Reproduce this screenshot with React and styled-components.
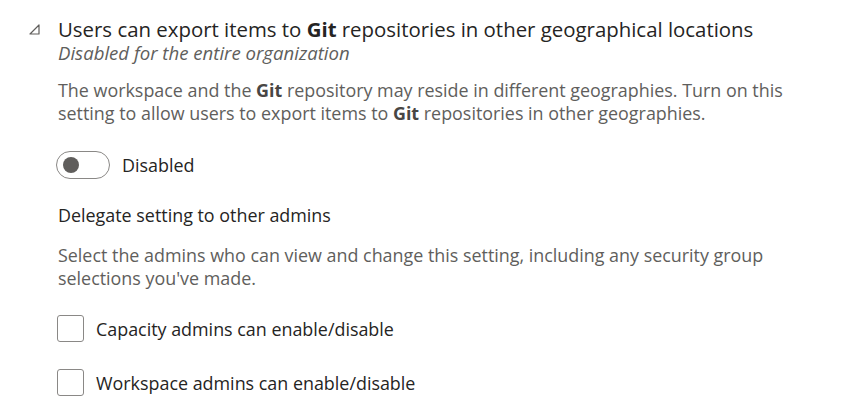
import React from "react";
import styled, { createGlobalStyle } from "styled-components";

const GlobalStyle = createGlobalStyle`
  body {
    margin: 0;
    background: #ffffff;
    font-family: "Open Sans", "Noto Sans", sans-serif;
    color: #252423;
  }
`;

const Page = styled.div`
  display: flex;
  align-items: flex-start;
  gap: 18px;
  padding: 16px 0 0 29px;
`;

const Chevron = styled.svg`
  flex: none;
  margin-top: 8px;
`;

const Body = styled.div`
  display: flex;
  flex-direction: column;
`;

const Title = styled.div`
  font-size: 20.4px;
  line-height: 26px;
  color: #252423;
`;

const Subtitle = styled.div`
  font-size: 18.6px;
  line-height: 21px;
  font-style: italic;
  color: #605e5c;
`;

const Description = styled.p`
  margin: ${(p) => p.$top}px 0 0;
  font-size: 17.9px;
  line-height: 23px;
  color: #605e5c;
  max-width: 728px;
`;

const Strong = styled.b`
  display: inline-block;
  font-weight: 700;
  color: ${(p) => p.$color || "inherit"};
`;

const ToggleRow = styled.label`
  display: flex;
  align-items: center;
  gap: 12px;
  margin: 26px 0 0 -2px;
  font-size: 17.9px;
  color: #252423;
`;

const Track = styled.span`
  box-sizing: border-box;
  width: 54px;
  height: 28px;
  border: 1px solid #8a8886;
  border-radius: 14px;
  display: flex;
  align-items: center;
  padding-left: 6px;
`;

const Knob = styled.span`
  width: 16px;
  height: 16px;
  border-radius: 50%;
  background: #605e5c;
`;

const Heading = styled.div`
  margin-top: 25px;
  font-size: 17.9px;
  line-height: 23px;
  color: #252423;
`;

const CheckRow = styled.label`
  display: flex;
  align-items: center;
  gap: 12px;
  margin: ${(p) => p.$top}px 0 0 -1px;
  font-size: 17.9px;
  color: #252423;
`;

const Box = styled.span`
  box-sizing: border-box;
  width: 27px;
  height: 27px;
  border: 1px solid #8a8886;
  border-radius: 3px;
`;

export default function App() {
  return (
    <>
      <GlobalStyle />
      <Page>
        <Chevron width="11" height="11" viewBox="0 0 11 11">
          <path
            d="M10 1 L10 10 L1 10 Z"
            fill="none"
            stroke="#605e5c"
            strokeWidth="1.2"
            strokeLinejoin="round"
          />
        </Chevron>
        <Body>
          <Title>
            Users can export items to <Strong>Git</Strong> repositories in other
            geographical locations
          </Title>
          <Subtitle>Disabled for the entire organization</Subtitle>
          <Description $top={16}>
            The workspace and the <Strong $color="#484644">Git</Strong>{" "}
            repository may reside in different geographies. Turn on this setting
            to allow users to export items to{" "}
            <Strong $color="#484644">Git</Strong> repositories in other
            geographies.
          </Description>
          <ToggleRow>
            <Track>
              <Knob />
            </Track>
            Disabled
          </ToggleRow>
          <Heading>Delegate setting to other admins</Heading>
          <Description $top={17}>
            Select the admins who can view and change this setting, including
            any security group selections you've made.
          </Description>
          <CheckRow $top={25}>
            <Box />
            Capacity admins can enable/disable
          </CheckRow>
          <CheckRow $top={27}>
            <Box />
            Workspace admins can enable/disable
          </CheckRow>
        </Body>
      </Page>
    </>
  );
}
